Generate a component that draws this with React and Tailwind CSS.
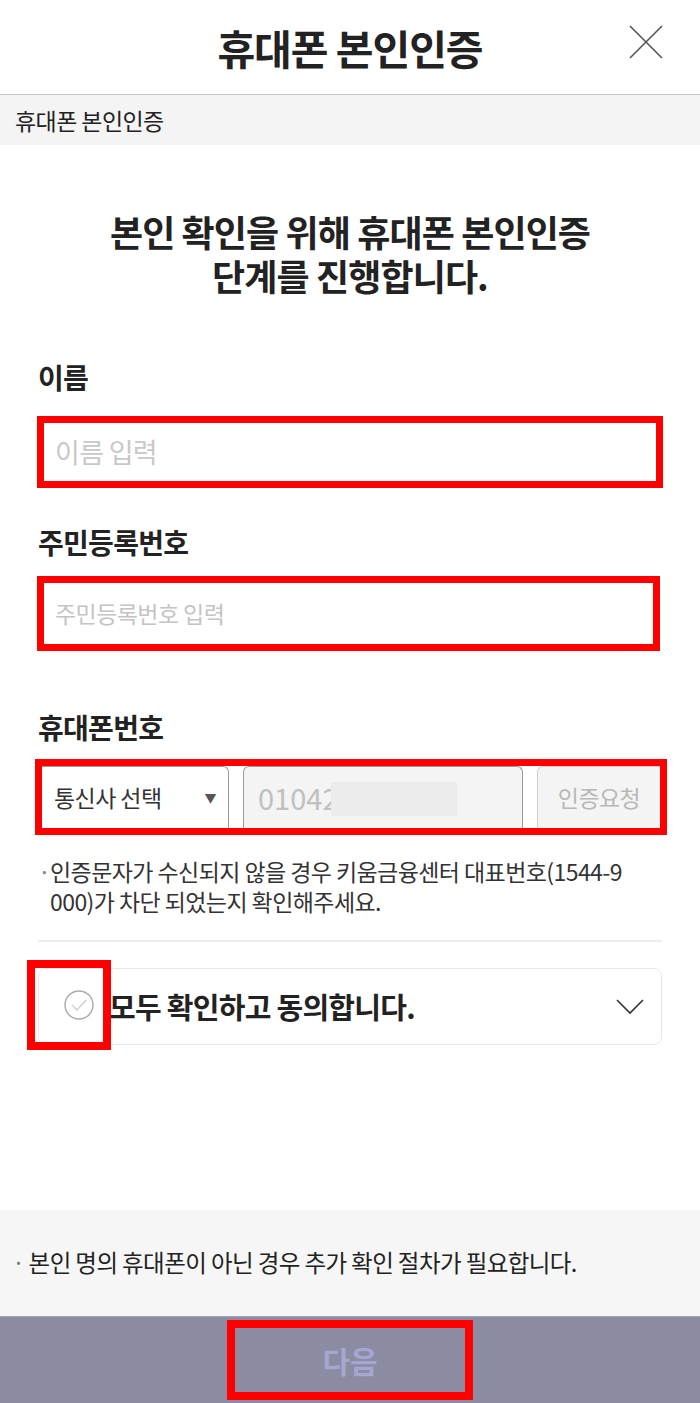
import React from "react";

const font = { fontFamily: '"Noto Sans CJK KR", "Noto Sans", sans-serif' };

export default function App() {
    return (
        <div className="w-[700px] h-[1403px] flex flex-col bg-white text-[#222]" style={font}>
            {/* Header */}
            <header className="relative h-[95px] shrink-0 flex items-center justify-center border-b border-[#c8c8c8]">
                <h1 className="text-[41px] font-bold tracking-tight leading-none">휴대폰 본인인증</h1>
                <svg className="absolute left-[628px] top-[24px]" width="36" height="36" viewBox="0 0 36 36">
                    <path d="M2 2 L34 34 M34 2 L2 34" stroke="#555" strokeWidth="1.6" fill="none" />
                </svg>
            </header>
            <div className="h-[50px] shrink-0 bg-[#f4f4f4] flex items-center px-[15px] text-[23px] tracking-tight">
                휴대폰 본인인증
            </div>

            {/* Form */}
            <main className="px-[38px]">
                <div className="mt-[64px] flex flex-col items-center text-[36px] font-bold leading-[44px] tracking-tight">
                    <p>본인 확인을 위해 휴대폰 본인인증</p>
                    <p>단계를 진행합니다.</p>
                </div>

                <label className="block mt-[64px] text-[28px] font-bold leading-[32px] tracking-tight">이름</label>
                <div className="mt-[23px] -ml-[1px] w-[626px] h-[72px] border-[7px] border-[#ff0000] flex items-center px-[11px] text-[27px] tracking-tight text-[#c8c8c8]">
                    이름 입력
                </div>

                <label className="block mt-[38px] text-[28px] font-bold leading-[32px] tracking-tight">주민등록번호</label>
                <div className="mt-[18px] -ml-[1px] w-[623px] h-[75px] border-[7px] border-[#ff0000] flex items-center px-[11px] text-[23px] tracking-tight text-[#c4c4c4]">
                    주민등록번호 입력
                </div>

                <label className="block mt-[60px] text-[28px] font-bold leading-[32px] tracking-tight">휴대폰번호</label>
                <div className="mt-[16px] -ml-[3px] w-[632px] h-[76px] border-[7px] border-[#ff0000] flex gap-[14px] overflow-hidden">
                    <div className="w-[187px] shrink-0 bg-white border-r border-t border-[#9a9a9a] rounded-tr-[6px] flex items-center justify-between pl-[12px] pr-[12px] text-[23px] tracking-tight text-[#333]">
                        <span>통신사 선택</span>
                        <span className="text-[12px] text-[#555]">▼</span>
                    </div>
                    <div className="relative w-[280px] shrink-0 bg-[#f4f4f4] border-l border-r border-t border-[#9a9a9a] rounded-t-[6px] flex items-center pl-[14px] text-[29px] text-[#c0c0c0]">
                        <span>01042</span>
                        {/* masked digits */}
                        <span className="absolute left-[87px] top-[15px] w-[126px] h-[34px] bg-[#ececec]"></span>
                    </div>
                    <div className="flex-1 bg-[#f4f4f4] border-l border-t border-[#d0d0d0] rounded-tl-[6px] flex items-center justify-center text-[23px] tracking-tight text-[#b8b8b8]">
                        인증요청
                    </div>
                </div>

                <div className="mt-[21px] flex text-[23px] leading-[30px] text-[#333] tracking-tight">
                    <span className="w-[12px] shrink-0 text-[#888]">·</span>
                    <div className="whitespace-nowrap">
                        <p>인증문자가 수신되지 않을 경우 키움금융센터 대표번호(1544-9</p>
                        <p>000)가 차단 되었는지 확인해주세요.</p>
                    </div>
                </div>

                <div className="mt-[24px] h-[2px] bg-[#ececec]"></div>

                <div className="relative mt-[26px] h-[77px] border border-[#e8e8e8] rounded-[8px] flex items-center pl-[70px] pr-[16px]">
                    <span className="text-[29px] font-bold tracking-tight">모두 확인하고 동의합니다.</span>
                    <svg className="ml-auto" width="30" height="18" viewBox="0 0 30 18">
                        <path d="M2 2 L15 15 L28 2" stroke="#333" strokeWidth="1.6" fill="none" />
                    </svg>
                    {/* annotated check */}
                    <div className="absolute -left-[12px] -top-[9px] w-[84px] h-[90px] border-[8px] border-[#ff0000] flex items-center pl-[28px]">
                        <svg width="32" height="32" viewBox="0 0 32 32">
                            <circle cx="16" cy="16" r="14" stroke="#aaa" strokeWidth="1.4" fill="white" />
                            <path d="M9 16 L14 21 L23 11" stroke="#cfcfcf" strokeWidth="1.4" fill="none" />
                        </svg>
                    </div>
                </div>
            </main>

            {/* Bottom */}
            <div className="mt-auto">
                <div className="h-[106px] bg-[#f6f6f6] flex items-center px-[12px] text-[23.5px] tracking-tight text-[#222]">
                    <span className="text-[#777] mr-[4px]">·</span>
                    본인 명의 휴대폰이 아닌 경우 추가 확인 절차가 필요합니다.
                </div>
                <div className="h-[87px] bg-[#8b8ba1] border-t border-[#a0a0b4] flex items-center justify-center">
                    <div className="w-[246px] h-[80px] border-[8px] border-[#ff0000] flex items-center justify-center text-[30px] font-bold text-[#a6a6d2]">
                        다음
                    </div>
                </div>
            </div>
        </div>
    );
}
